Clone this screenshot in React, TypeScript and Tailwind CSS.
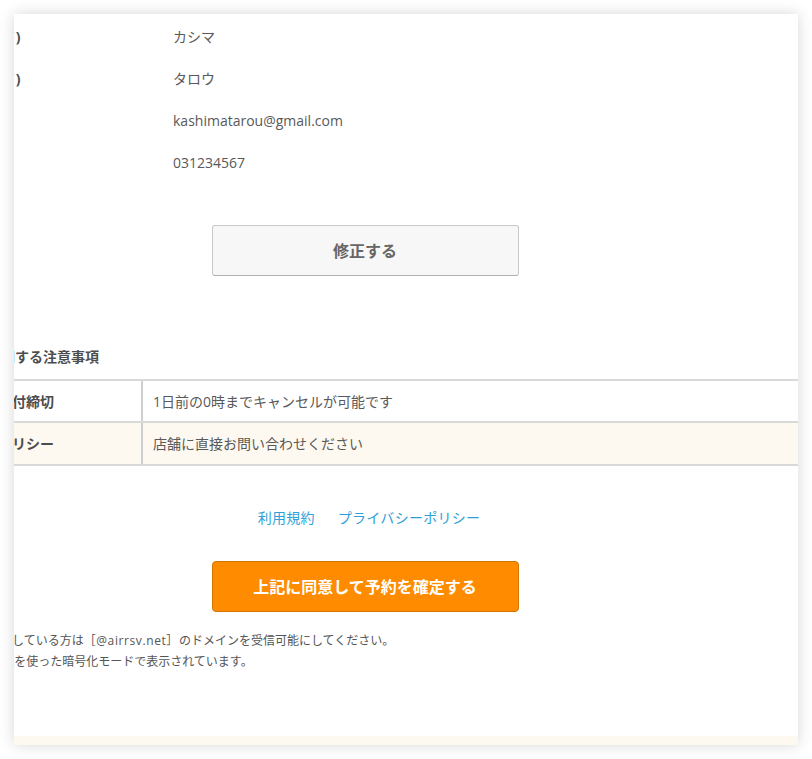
import React from 'react';

const font = { fontFamily: '"Open Sans", "Noto Sans CJK JP", sans-serif' };

const profile = [
  { label: 'フリガナ(セイ)', value: 'カシマ' },
  { label: 'フリガナ(メイ)', value: 'タロウ' },
  { label: '連絡先メール', value: 'kashimatarou@gmail.com' },
  { label: '電話番号', value: '031234567' },
];

const notes = [
  { label: 'キャンセル受付締切', value: '1日前の0時までキャンセルが可能です', bg: 'bg-white', h: 'h-[42px]' },
  { label: 'キャンセルポリシー', value: '店舗に直接お問い合わせください', bg: 'bg-[#fef9f0]', h: 'h-[43px]' },
];

const App = () => {
  return (
    <div className="min-h-[759px] bg-white p-[14px]" style={font}>
      <div className="flex h-[731px] w-[784px] flex-col overflow-hidden bg-white shadow-[0_0_14px_rgba(0,0,0,0.16)]">
        {/* page content, scrolled so its left edge sits outside the frame */}
        <div className="-ml-[96px] w-[894px] shrink-0">
          {/* confirmed profile */}
          <div className="pt-[1px] pl-[9px]">
            {profile.map((row) => (
              <div key={row.label} className="grid h-[42px] grid-cols-[246px_1fr] items-center text-[14px]">
                <span className="whitespace-nowrap font-bold text-[#4d4d4d]">{row.label}</span>
                <span className="text-[#595959]">{row.value}</span>
              </div>
            ))}
          </div>

          <button className="mx-auto mt-[42px] flex h-[51px] w-[307px] items-center justify-center rounded-[3px] border border-[#c9c9c9] border-b-[#b0b0b0] bg-[#f7f7f7] text-[16px] font-bold text-[#666]">
            修正する
          </button>

          {/* notes */}
          <h3 className="mt-[71px] pl-[13px] text-[14px] font-bold leading-[20px] whitespace-nowrap text-[#4d4d4d]">
            予約内容に関する注意事項
          </h3>
          <div className="mt-[12px] border-t-2 border-[#d9d9d9]">
            {notes.map((row) => (
              <div
                key={row.label}
                className={`grid grid-cols-[223px_1fr] border-b-2 border-[#d9d9d9] ${row.bg} ${row.h}`}
              >
                <div className="flex items-center pl-[10px] text-[14px] font-bold whitespace-nowrap text-[#4d4d4d]">
                  {row.label}
                </div>
                <div className="flex items-center border-l-2 border-[#cfcfcf] pl-[10px] text-[14px] text-[#595959]">
                  {row.value}
                </div>
              </div>
            ))}
          </div>

          {/* links */}
          <div className="mt-[42px] flex justify-center gap-[23px] pl-[8px] text-[14px] leading-[20px] tracking-[0.02em] text-[#2f9fd8]">
            <a href="#">利用規約</a>
            <a href="#">プライバシーポリシー</a>
          </div>

          <button className="mx-auto mt-[33px] flex h-[51px] w-[307px] items-center justify-center rounded-[4px] border border-[#d27400] bg-[#ff8c00] text-[16px] font-bold text-white">
            上記に同意して予約を確定する
          </button>

          <div className="mt-[18px] pl-[10px] text-[12px] leading-[21px] whitespace-nowrap text-[#555]">
            <p>
              ※ドメイン指定している方は<span className="tracking-[0.05em]">［@airrsv.net］</span>のドメインを受信可能にしてください。
            </p>
            <p className="-ml-[5px]">※本ページはSSLを使った暗号化モードで表示されています。</p>
          </div>
        </div>

        <div className="mt-auto h-[9px] shrink-0 bg-[#fef9f0]" />
      </div>
    </div>
  );
};

export default App;
